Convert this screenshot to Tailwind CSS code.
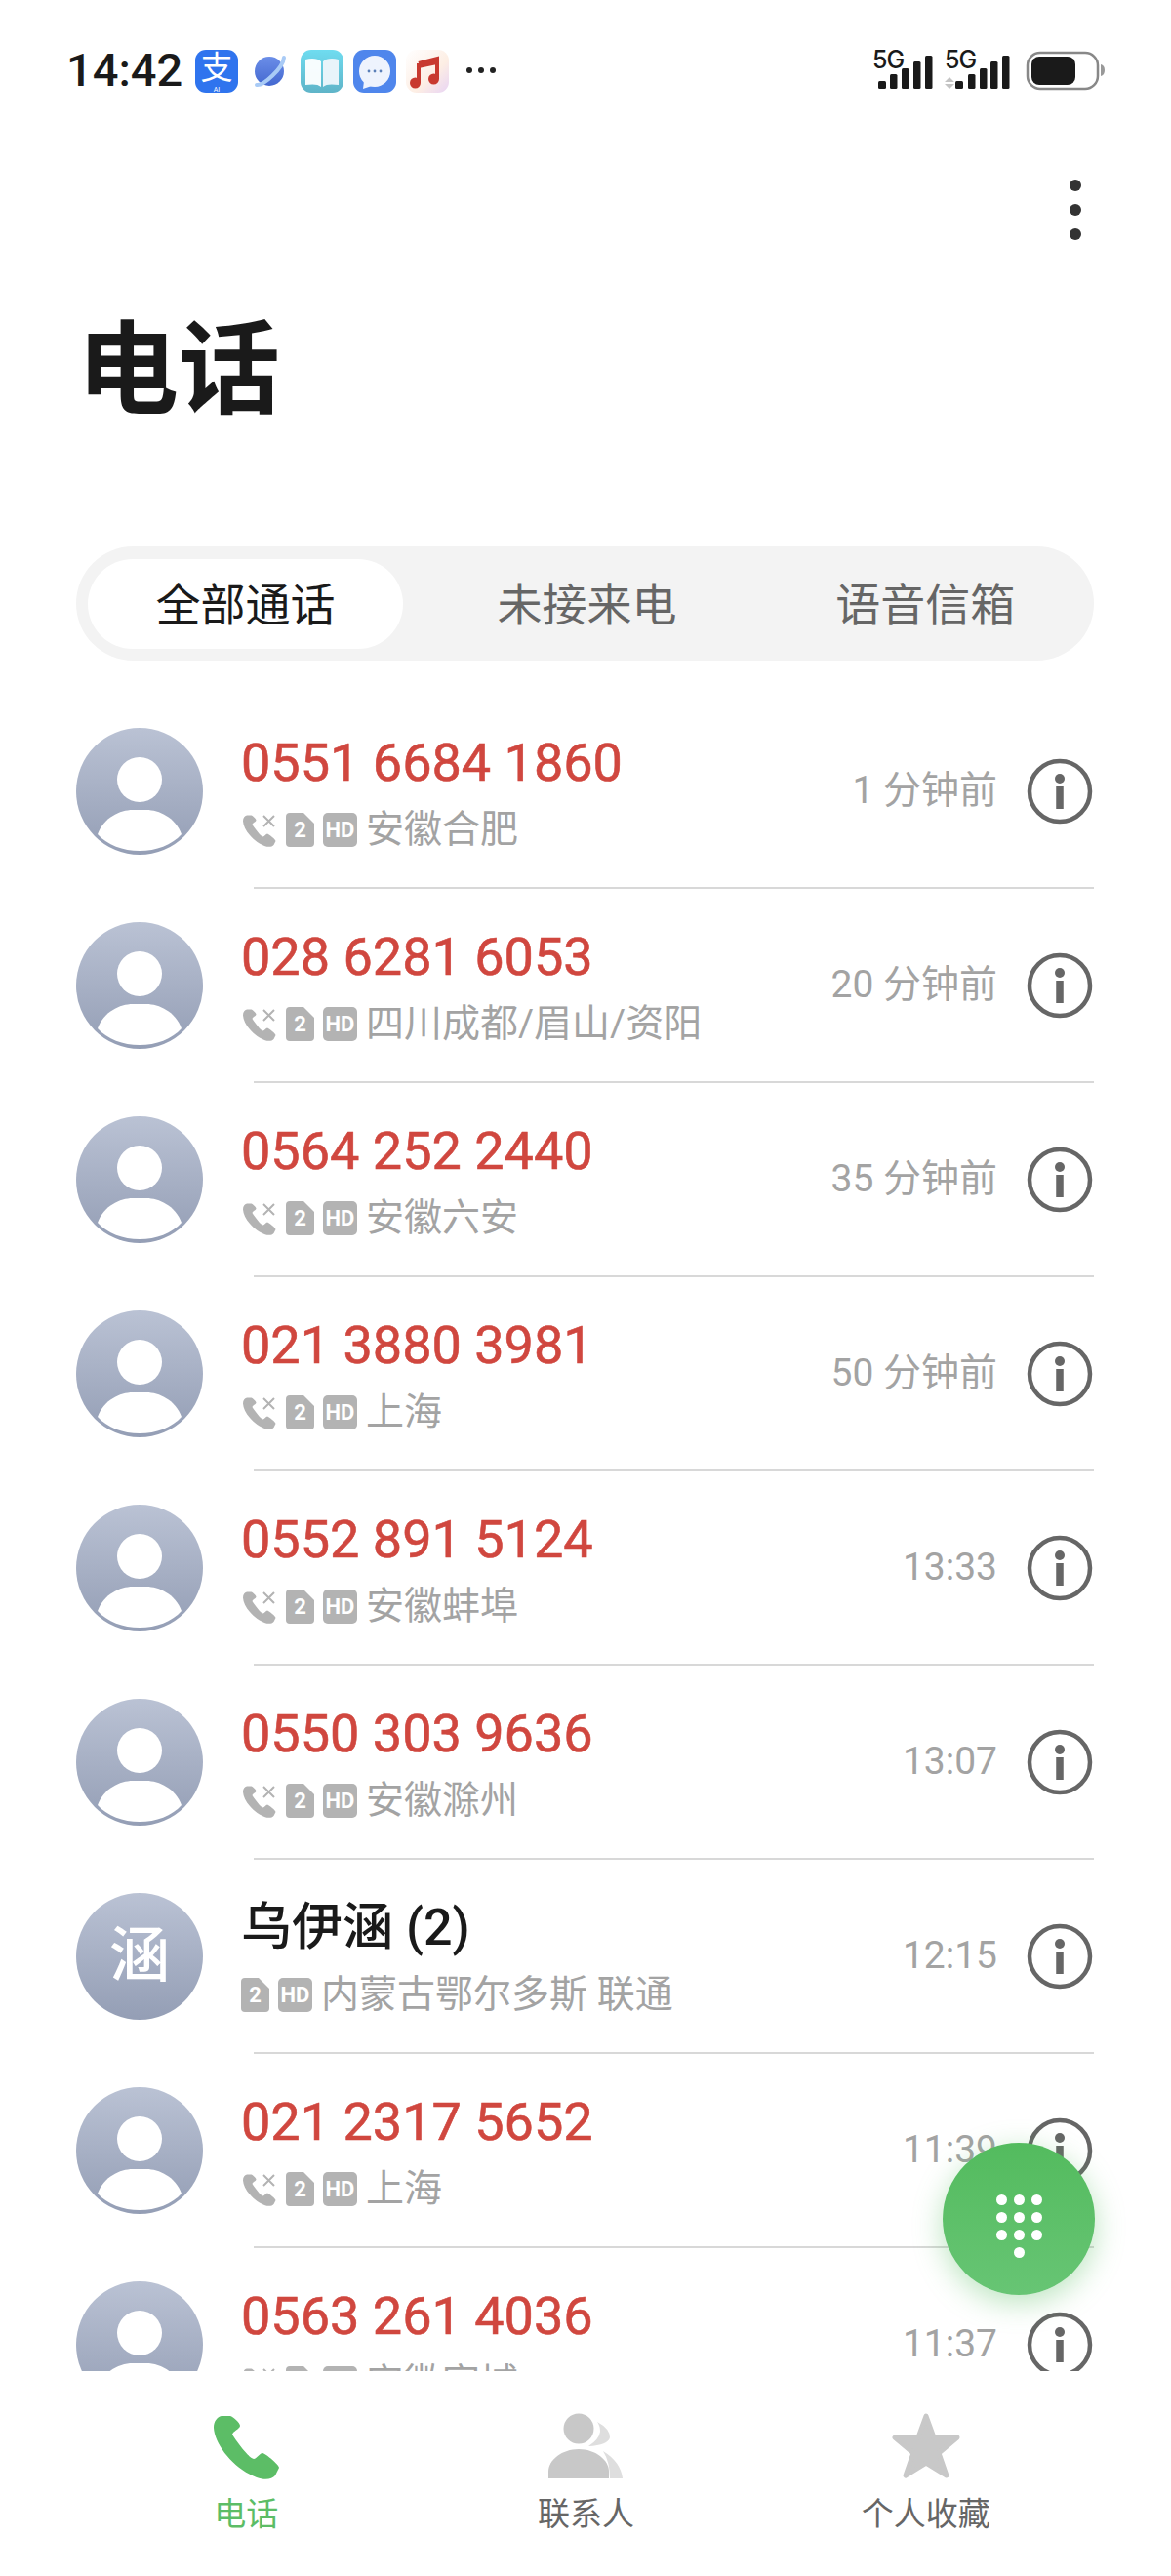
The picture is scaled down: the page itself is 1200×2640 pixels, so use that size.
<!DOCTYPE html>
<html lang="zh">
<head>
<meta charset="utf-8">
<script src="https://cdn.jsdelivr.net/npm/@tailwindcss/browser@4"></script>
</head>
<body class="bg-white">
<svg width="0" height="0" class="absolute">
  <defs>
    <linearGradient id="avg" x1="0" y1="0" x2="0" y2="1"><stop offset="0" stop-color="#bac2d4"/><stop offset="1" stop-color="#949eb5"/></linearGradient>
    <symbol id="handset" viewBox="0 0 67 66"><path d="M8 1C3 2 0 7 0 13C1 30 20 55 44 64C52 67 60 66 63 62L67 54C67 51 54 40 50 39C47 39 44 45 41 45C36 44 24 28 19 20C19 17 27 14 27 11C27 8 20 2 17 1Z"/></symbol>
    <symbol id="avatar" viewBox="0 0 130 130"><circle cx="65" cy="65" r="65" fill="url(#avg)"/><circle cx="65" cy="53" r="23" fill="#fff"/><path d="M22 109C28 92 45 84 58 84H72C85 84 102 92 108 109C98 120 82 126 65 126C48 126 32 120 22 109Z" fill="#fff"/></symbol>
    <symbol id="info" viewBox="0 0 68 68"><circle cx="34" cy="34" r="31" fill="none" stroke="#666" stroke-width="4.500"/><circle cx="34" cy="21" r="5" fill="#666"/><rect x="30.250" y="29" width="7.500" height="23" fill="#666"/></symbol>
    <symbol id="missed" viewBox="0 0 34 35"><path transform="translate(0 2) scale(.5)" fill="#b3b3b3" d="M8 1C3 2 0 7 0 13C1 30 20 55 44 64C52 67 60 66 63 62L67 54C67 51 54 40 50 39C47 39 44 45 41 45C36 44 24 28 19 20C19 17 27 14 27 11C27 8 20 2 17 1Z"/><path d="M21 3L32 14M32 3L21 14" stroke="#b3b3b3" stroke-width="2" fill="none"/></symbol>
    <symbol id="sim" viewBox="0 0 29 35"><path d="M4 0H18L29 11V31Q29 35 25 35H4Q0 35 0 31V4Q0 0 4 0Z" fill="#b3b3b3"/></symbol>
  </defs>
</svg>

<div class="relative w-[1200px] h-[2640px] overflow-hidden bg-white flex flex-col font-['Roboto','Noto_Sans_CJK_SC',sans-serif]">

  <!-- status bar -->
  <div class="h-[140px] shrink-0 flex items-start pl-[68px] pr-[66px] pt-[50px]">
    <div class="text-[47px] leading-[44px] font-medium text-[#1a1a1a] w-[132px]">14:42</div>
    <svg width="270" height="70" viewBox="0 -12 270 70" class="block -mt-[12px]">
      <defs>
        <linearGradient id="bk" x1="0" y1="0" x2="0" y2="1"><stop offset="0" stop-color="#6fdcf0"/><stop offset="1" stop-color="#5fb4c8"/></linearGradient>
        <linearGradient id="mu" x1="0" y1="0" x2="1" y2="1"><stop offset="0" stop-color="#fff"/><stop offset=".6" stop-color="#fdeee4"/><stop offset="1" stop-color="#e8d4f4"/></linearGradient>
        <linearGradient id="pl" x1="0" y1="0" x2="0" y2="1"><stop offset="0" stop-color="#6b8ee8"/><stop offset="1" stop-color="#4468d0"/></linearGradient>
      </defs>
      <!-- alipay -->
      <rect x="0" y="1" width="44" height="44" rx="11" fill="#2f74ee"/>
      <text x="22" y="31" text-anchor="middle" font-size="33" font-weight="400" fill="#fff" font-family="Noto Sans CJK SC">支</text>
      <text x="22" y="44" text-anchor="middle" font-size="7" fill="#fff" font-family="Roboto">AI</text>
      <!-- planet -->
      <circle cx="76" cy="23" r="15" fill="url(#pl)"/>
      <path d="M63 37C70 38 90 20 91 9" fill="none" stroke="#a9cbf6" stroke-width="4" stroke-linecap="round"/>
      <!-- book -->
      <rect x="108" y="1" width="44" height="44" rx="11" fill="url(#bk)"/>
      <path d="M113 11C120 9 126 10 129 13V39C126 36 120 36 113 37Z" fill="#fff" opacity=".95"/>
      <path d="M147 11C140 9 134 10 131 13V39C134 36 140 36 147 37Z" fill="#e8f4fa"/>
      <!-- messages -->
      <rect x="162" y="1" width="44" height="44" rx="11" fill="#4f86ec"/>
      <circle cx="184" cy="23" r="16" fill="#eef3fd"/>
      <path d="M173 33L172 41L181 38Z" fill="#eef3fd"/>
      <circle cx="178" cy="23" r="1.400" fill="#5b7fb8"/><circle cx="184" cy="23" r="1.400" fill="#5b7fb8"/><circle cx="190" cy="23" r="1.400" fill="#5b7fb8"/>
      <!-- music -->
      <rect x="216" y="1" width="44" height="44" rx="11" fill="url(#mu)"/>
      <path d="M229 15L248 10V31" fill="none" stroke="#c8392f" stroke-width="4"/>
      <path d="M229 14L248 10V16L229 20Z" fill="#c8392f"/>
      <path d="M229 15V35" stroke="#c8392f" stroke-width="4"/>
      <circle cx="225.500" cy="35" r="5.500" fill="#c8392f"/><circle cx="244.500" cy="31" r="5.500" fill="#c8392f"/>
    </svg>
    <div class="flex gap-[6px] mt-[19px] ml-[8px] w-[30px]">
      <span class="w-[6px] h-[6px] shrink-0 rounded-full bg-[#222]"></span>
      <span class="w-[6px] h-[6px] shrink-0 rounded-full bg-[#222]"></span>
      <span class="w-[6px] h-[6px] shrink-0 rounded-full bg-[#222]"></span>
    </div>
    <svg width="240" height="70" viewBox="0 -12 240 70" class="block ml-auto -mt-[12px]">
      <text x="0" y="20" font-size="25" font-weight="500" fill="#1a1a1a" font-family="Inter" letter-spacing="-1">5G</text>
      <g fill="#1a1a1a">
        <rect x="6" y="33" width="8" height="8" rx="1.500"/><rect x="18" y="26" width="7.500" height="15" rx="1.500"/><rect x="30" y="20" width="7.500" height="21" rx="1.500"/><rect x="42" y="13" width="7.500" height="28" rx="1.500"/><rect x="54" y="7" width="7.500" height="34" rx="1.500"/>
      </g>
      <text x="74" y="20" font-size="25" font-weight="500" fill="#1a1a1a" font-family="Inter" letter-spacing="-1">5G</text>
      <path d="M74 34L79 29L84 34ZM74 36L79 41L84 36Z" fill="#c4c4c4"/>
      <g fill="#1a1a1a">
        <rect x="85" y="33" width="8" height="8" rx="1.500"/><rect x="98" y="26" width="7.500" height="15" rx="1.500"/><rect x="110" y="20" width="7.500" height="21" rx="1.500"/><rect x="121" y="13" width="7.500" height="28" rx="1.500"/><rect x="133" y="7" width="7.500" height="34" rx="1.500"/>
      </g>
      <rect x="159" y="4" width="72" height="37" rx="13" fill="none" stroke="#888" stroke-width="2.500"/>
      <rect x="163" y="8" width="45" height="29" rx="8" fill="#1a1a1a"/>
      <path d="M234 16Q238 17 238 22Q238 27 234 28Z" fill="#999"/>
    </svg>
  </div>

  <!-- toolbar -->
  <div class="h-[120px] shrink-0 flex flex-col items-end gap-[13px] pr-[92px] pt-[44px]">
    <span class="w-[12px] h-[12px] rounded-full bg-[#333]"></span>
    <span class="w-[12px] h-[12px] rounded-full bg-[#333]"></span>
    <span class="w-[12px] h-[12px] rounded-full bg-[#333]"></span>
  </div>

  <!-- title -->
  <div class="h-[300px] shrink-0 pl-[79px] pt-[57px]">
    <div class="text-[104px] leading-[128px] font-bold text-[#1a1a1a]">电话</div>
  </div>

  <!-- tabs -->
  <div class="h-[117px] shrink-0 mx-[78px] w-[1043px] rounded-full bg-[#f3f3f3] grid grid-cols-3 items-center px-[12px] text-[46px] text-[#666]">
    <div class="h-[92px] w-[323px] pt-[4px] rounded-full bg-white flex items-center justify-center text-[#1a1a1a]">全部通话</div>
    <div class="text-center pl-[4px] pt-[4px]">未接来电</div>
    <div class="text-center pl-[18px] pt-[4px]">语音信箱</div>
  </div>
  <div class="h-[35px] shrink-0"></div>

  <!-- list -->
  <div class="h-[1718px] shrink-0 overflow-hidden">

    <div class="h-[197px] flex items-center pl-[78px] pr-[80px]">
      <svg width="130" height="130" class="shrink-0"><use href="#avatar"/></svg>
      <div class="flex-1 ml-[39px] h-full pt-[38px]">
        <div class="text-[54px] leading-[64px] [-webkit-text-stroke:0.6px_#d0473f] text-[#d0473f]">0551 6684 1860</div>
        <div class="mt-[14px] h-[44px] flex items-center text-[39px] text-[#a3a3a3]">
          <svg width="34" height="35" class="mt-[1px] ml-[2px] mr-[10px]"><use href="#missed"/></svg>
          <span class="relative w-[29px] h-[35px] mr-[9px] flex items-center justify-center"><svg width="29" height="35" class="absolute inset-0"><use href="#sim"/></svg><span class="relative text-[22px] font-bold text-white">2</span></span>
          <span class="w-[35px] h-[35px] mr-[9px] rounded-[5px] bg-[#b3b3b3] flex items-center justify-center text-[22px] font-bold text-white">HD</span>
          <span>安徽合肥</span>
        </div>
      </div>
      <div class="text-[39px] text-[#a3a3a3] mr-[30px]">1 分钟前</div>
      <svg width="68" height="68" class="shrink-0"><use href="#info"/></svg>
    </div>
    <div class="h-[2px] ml-[260px] mr-[79px] bg-[#d8d8d8]"></div>

    <div class="h-[197px] flex items-center pl-[78px] pr-[80px]">
      <svg width="130" height="130" class="shrink-0"><use href="#avatar"/></svg>
      <div class="flex-1 ml-[39px] h-full pt-[38px]">
        <div class="text-[54px] leading-[64px] [-webkit-text-stroke:0.6px_#d0473f] text-[#d0473f]">028 6281 6053</div>
        <div class="mt-[14px] h-[44px] flex items-center text-[39px] text-[#a3a3a3]">
          <svg width="34" height="35" class="mt-[1px] ml-[2px] mr-[10px]"><use href="#missed"/></svg>
          <span class="relative w-[29px] h-[35px] mr-[9px] flex items-center justify-center"><svg width="29" height="35" class="absolute inset-0"><use href="#sim"/></svg><span class="relative text-[22px] font-bold text-white">2</span></span>
          <span class="w-[35px] h-[35px] mr-[9px] rounded-[5px] bg-[#b3b3b3] flex items-center justify-center text-[22px] font-bold text-white">HD</span>
          <span>四川成都/眉山/资阳</span>
        </div>
      </div>
      <div class="text-[39px] text-[#a3a3a3] mr-[30px]">20 分钟前</div>
      <svg width="68" height="68" class="shrink-0"><use href="#info"/></svg>
    </div>
    <div class="h-[2px] ml-[260px] mr-[79px] bg-[#d8d8d8]"></div>

    <div class="h-[197px] flex items-center pl-[78px] pr-[80px]">
      <svg width="130" height="130" class="shrink-0"><use href="#avatar"/></svg>
      <div class="flex-1 ml-[39px] h-full pt-[38px]">
        <div class="text-[54px] leading-[64px] [-webkit-text-stroke:0.6px_#d0473f] text-[#d0473f]">0564 252 2440</div>
        <div class="mt-[14px] h-[44px] flex items-center text-[39px] text-[#a3a3a3]">
          <svg width="34" height="35" class="mt-[1px] ml-[2px] mr-[10px]"><use href="#missed"/></svg>
          <span class="relative w-[29px] h-[35px] mr-[9px] flex items-center justify-center"><svg width="29" height="35" class="absolute inset-0"><use href="#sim"/></svg><span class="relative text-[22px] font-bold text-white">2</span></span>
          <span class="w-[35px] h-[35px] mr-[9px] rounded-[5px] bg-[#b3b3b3] flex items-center justify-center text-[22px] font-bold text-white">HD</span>
          <span>安徽六安</span>
        </div>
      </div>
      <div class="text-[39px] text-[#a3a3a3] mr-[30px]">35 分钟前</div>
      <svg width="68" height="68" class="shrink-0"><use href="#info"/></svg>
    </div>
    <div class="h-[2px] ml-[260px] mr-[79px] bg-[#d8d8d8]"></div>

    <div class="h-[197px] flex items-center pl-[78px] pr-[80px]">
      <svg width="130" height="130" class="shrink-0"><use href="#avatar"/></svg>
      <div class="flex-1 ml-[39px] h-full pt-[38px]">
        <div class="text-[54px] leading-[64px] [-webkit-text-stroke:0.6px_#d0473f] text-[#d0473f]">021 3880 3981</div>
        <div class="mt-[14px] h-[44px] flex items-center text-[39px] text-[#a3a3a3]">
          <svg width="34" height="35" class="mt-[1px] ml-[2px] mr-[10px]"><use href="#missed"/></svg>
          <span class="relative w-[29px] h-[35px] mr-[9px] flex items-center justify-center"><svg width="29" height="35" class="absolute inset-0"><use href="#sim"/></svg><span class="relative text-[22px] font-bold text-white">2</span></span>
          <span class="w-[35px] h-[35px] mr-[9px] rounded-[5px] bg-[#b3b3b3] flex items-center justify-center text-[22px] font-bold text-white">HD</span>
          <span>上海</span>
        </div>
      </div>
      <div class="text-[39px] text-[#a3a3a3] mr-[30px]">50 分钟前</div>
      <svg width="68" height="68" class="shrink-0"><use href="#info"/></svg>
    </div>
    <div class="h-[2px] ml-[260px] mr-[79px] bg-[#d8d8d8]"></div>

    <div class="h-[197px] flex items-center pl-[78px] pr-[80px]">
      <svg width="130" height="130" class="shrink-0"><use href="#avatar"/></svg>
      <div class="flex-1 ml-[39px] h-full pt-[38px]">
        <div class="text-[54px] leading-[64px] [-webkit-text-stroke:0.6px_#d0473f] text-[#d0473f]">0552 891 5124</div>
        <div class="mt-[14px] h-[44px] flex items-center text-[39px] text-[#a3a3a3]">
          <svg width="34" height="35" class="mt-[1px] ml-[2px] mr-[10px]"><use href="#missed"/></svg>
          <span class="relative w-[29px] h-[35px] mr-[9px] flex items-center justify-center"><svg width="29" height="35" class="absolute inset-0"><use href="#sim"/></svg><span class="relative text-[22px] font-bold text-white">2</span></span>
          <span class="w-[35px] h-[35px] mr-[9px] rounded-[5px] bg-[#b3b3b3] flex items-center justify-center text-[22px] font-bold text-white">HD</span>
          <span>安徽蚌埠</span>
        </div>
      </div>
      <div class="text-[39px] text-[#a3a3a3] mr-[30px]">13:33</div>
      <svg width="68" height="68" class="shrink-0"><use href="#info"/></svg>
    </div>
    <div class="h-[2px] ml-[260px] mr-[79px] bg-[#d8d8d8]"></div>

    <div class="h-[197px] flex items-center pl-[78px] pr-[80px]">
      <svg width="130" height="130" class="shrink-0"><use href="#avatar"/></svg>
      <div class="flex-1 ml-[39px] h-full pt-[38px]">
        <div class="text-[54px] leading-[64px] [-webkit-text-stroke:0.6px_#d0473f] text-[#d0473f]">0550 303 9636</div>
        <div class="mt-[14px] h-[44px] flex items-center text-[39px] text-[#a3a3a3]">
          <svg width="34" height="35" class="mt-[1px] ml-[2px] mr-[10px]"><use href="#missed"/></svg>
          <span class="relative w-[29px] h-[35px] mr-[9px] flex items-center justify-center"><svg width="29" height="35" class="absolute inset-0"><use href="#sim"/></svg><span class="relative text-[22px] font-bold text-white">2</span></span>
          <span class="w-[35px] h-[35px] mr-[9px] rounded-[5px] bg-[#b3b3b3] flex items-center justify-center text-[22px] font-bold text-white">HD</span>
          <span>安徽滁州</span>
        </div>
      </div>
      <div class="text-[39px] text-[#a3a3a3] mr-[30px]">13:07</div>
      <svg width="68" height="68" class="shrink-0"><use href="#info"/></svg>
    </div>
    <div class="h-[2px] ml-[260px] mr-[79px] bg-[#d8d8d8]"></div>

    <div class="h-[197px] flex items-center pl-[78px] pr-[80px]">
      <div class="w-[130px] h-[130px] shrink-0 rounded-full bg-gradient-to-b from-[#bac2d4] to-[#949eb5] flex items-center justify-center text-[62px] font-medium text-white">涵</div>
      <div class="flex-1 ml-[39px] h-full pt-[38px]">
        <div class="text-[52px] leading-[64px] font-medium text-[#1a1a1a]">乌伊涵 (2)</div>
        <div class="mt-[14px] h-[44px] flex items-center text-[39px] text-[#a3a3a3]">
          <span class="relative w-[29px] h-[35px] mr-[9px] flex items-center justify-center"><svg width="29" height="35" class="absolute inset-0"><use href="#sim"/></svg><span class="relative text-[22px] font-bold text-white">2</span></span>
          <span class="w-[35px] h-[35px] mr-[9px] rounded-[5px] bg-[#b3b3b3] flex items-center justify-center text-[22px] font-bold text-white">HD</span>
          <span>内蒙古鄂尔多斯 联通</span>
        </div>
      </div>
      <div class="text-[39px] text-[#a3a3a3] mr-[30px]">12:15</div>
      <svg width="68" height="68" class="shrink-0"><use href="#info"/></svg>
    </div>
    <div class="h-[2px] ml-[260px] mr-[79px] bg-[#d8d8d8]"></div>

    <div class="h-[197px] flex items-center pl-[78px] pr-[80px]">
      <svg width="130" height="130" class="shrink-0"><use href="#avatar"/></svg>
      <div class="flex-1 ml-[39px] h-full pt-[38px]">
        <div class="text-[54px] leading-[64px] [-webkit-text-stroke:0.6px_#d0473f] text-[#d0473f]">021 2317 5652</div>
        <div class="mt-[14px] h-[44px] flex items-center text-[39px] text-[#a3a3a3]">
          <svg width="34" height="35" class="mt-[1px] ml-[2px] mr-[10px]"><use href="#missed"/></svg>
          <span class="relative w-[29px] h-[35px] mr-[9px] flex items-center justify-center"><svg width="29" height="35" class="absolute inset-0"><use href="#sim"/></svg><span class="relative text-[22px] font-bold text-white">2</span></span>
          <span class="w-[35px] h-[35px] mr-[9px] rounded-[5px] bg-[#b3b3b3] flex items-center justify-center text-[22px] font-bold text-white">HD</span>
          <span>上海</span>
        </div>
      </div>
      <div class="text-[39px] text-[#a3a3a3] mr-[30px]">11:39</div>
      <svg width="68" height="68" class="shrink-0"><use href="#info"/></svg>
    </div>
    <div class="h-[2px] ml-[260px] mr-[79px] bg-[#d8d8d8]"></div>

    <div class="h-[197px] flex items-center pl-[78px] pr-[80px]">
      <svg width="130" height="130" class="shrink-0"><use href="#avatar"/></svg>
      <div class="flex-1 ml-[39px] h-full pt-[38px]">
        <div class="text-[54px] leading-[64px] [-webkit-text-stroke:0.6px_#d0473f] text-[#d0473f]">0563 261 4036</div>
        <div class="mt-[14px] h-[44px] flex items-center text-[39px] text-[#a3a3a3]">
          <svg width="34" height="35" class="mt-[1px] ml-[2px] mr-[10px]"><use href="#missed"/></svg>
          <span class="relative w-[29px] h-[35px] mr-[9px] flex items-center justify-center"><svg width="29" height="35" class="absolute inset-0"><use href="#sim"/></svg><span class="relative text-[22px] font-bold text-white">2</span></span>
          <span class="w-[35px] h-[35px] mr-[9px] rounded-[5px] bg-[#b3b3b3] flex items-center justify-center text-[22px] font-bold text-white">HD</span>
          <span>安徽宣城</span>
        </div>
      </div>
      <div class="text-[39px] text-[#a3a3a3] mr-[30px]">11:37</div>
      <svg width="68" height="68" class="shrink-0"><use href="#info"/></svg>
    </div>
  </div>

  <!-- bottom nav -->
  <div class="h-[210px] shrink-0 bg-white grid grid-cols-3 pl-[78px] pr-[77px] pt-[42px] text-[33px] leading-[40px] text-[#666]">
    <div class="flex flex-col items-center">
      <svg width="67" height="66" viewBox="0 0 67 66" fill="#5cbd66" class="mt-[3px]"><use href="#handset" width="67" height="66"/></svg>
      <div class="mt-[16px] text-[#5cbd66]">电话</div>
    </div>
    <div class="flex flex-col items-center">
      <svg width="76" height="68" viewBox="0 0 76 68" class="mt-[1px]">
        <path d="M50 9Q63 16 63 25Q61 33 41 34Q52 27 53 19Q53 13 50 9Z" fill="#dedede"/>
        <path d="M56 39Q74 50 76 67H63Q63 50 56 39Z" fill="#dedede"/>
        <circle cx="31" cy="16" r="15.500" fill="#c8c8c8"/>
        <path d="M0 67V60C0 48 14 37 31 37C48 37 62 48 62 60V67Z" fill="#c8c8c8"/>
      </svg>
      <div class="mt-[16px]">联系人</div>
    </div>
    <div class="flex flex-col items-center">
      <svg width="70" height="68" viewBox="0 0 70 68" class="mt-[1px]">
        <path d="M35 3L43 25H67L48 41L56 64L35 51L14 64L22 41L3 25H27Z" fill="#c8c8c8" stroke="#c8c8c8" stroke-width="5" stroke-linejoin="round"/>
      </svg>
      <div class="mt-[16px]">个人收藏</div>
    </div>
  </div>

  <!-- dial FAB -->
  <div class="absolute left-[966px] top-[2196px] w-[156px] h-[156px] pt-[14px] rounded-full bg-gradient-to-b from-[#53bb5e] to-[#67c574] shadow-[0_8px_30px_rgba(85,188,95,0.4)] flex items-center justify-center">
    <div class="grid grid-cols-[11px_11px_11px] gap-[7px]">
      <span class="w-[11px] h-[11px] rounded-full bg-white"></span><span class="w-[11px] h-[11px] rounded-full bg-white"></span><span class="w-[11px] h-[11px] rounded-full bg-white"></span>
      <span class="w-[11px] h-[11px] rounded-full bg-white"></span><span class="w-[11px] h-[11px] rounded-full bg-white"></span><span class="w-[11px] h-[11px] rounded-full bg-white"></span>
      <span class="w-[11px] h-[11px] rounded-full bg-white"></span><span class="w-[11px] h-[11px] rounded-full bg-white"></span><span class="w-[11px] h-[11px] rounded-full bg-white"></span>
      <span class="col-start-2 w-[11px] h-[11px] rounded-full bg-white"></span>
    </div>
  </div>
</div>
</body>
</html>
